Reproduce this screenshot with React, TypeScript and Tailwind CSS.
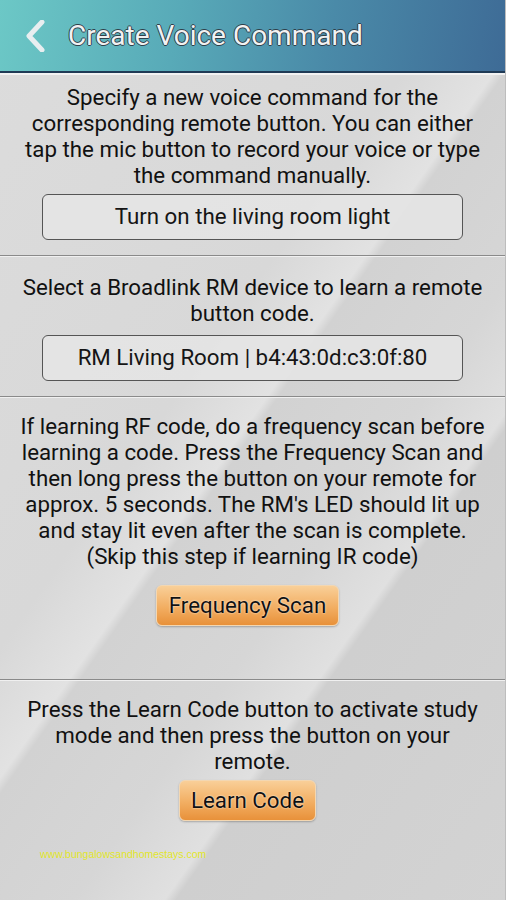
import React from "react";

const font = { fontFamily: "Roboto, 'Noto Sans', sans-serif" };

function Divider() {
  return (
    <div className="flex flex-col">
      <div className="h-px bg-[#8a8a8a]" />
      <div className="h-px bg-[#f0f0f0]" />
    </div>
  );
}

function Lines({ lines }: { lines: string[] }) {
  return (
    <div className="flex flex-col items-center text-[22.3px] leading-[26px] text-[#111] whitespace-nowrap">
      {lines.map((l) => (
        <span key={l}>{l}</span>
      ))}
    </div>
  );
}

function Field({ children }: { children: React.ReactNode }) {
  return (
    <div className="mx-[42px] h-[46px] rounded-[6px] border border-[#555] bg-[#e4e4e4]/90 flex items-center justify-center text-[22.3px] text-[#151515]">
      {children}
    </div>
  );
}

function OrangeButton({ children, w }: { children: React.ReactNode; w: string }) {
  return (
    <div className="flex justify-center pr-[10px]">
      <div
        className={`${w} h-[41px] rounded-[6px] border border-[#f3d7b2] bg-[linear-gradient(180deg,#f9cf98_0%,#f2ae62_55%,#e8913a_100%)] shadow-[0_1px_2px_rgba(0,0,0,0.25)] flex items-center justify-center text-[22.3px] text-[#111] [text-shadow:0_0_2px_#fff]`}
      >
        {children}
      </div>
    </div>
  );
}

export default function App() {
  return (
    <div
      style={font}
      className="w-[506px] h-[900px] overflow-hidden flex flex-col bg-[linear-gradient(125deg,#dcdcdc_0%,#d8d8d8_40%,#e2e2e2_48%,#d2d2d2_49%,#d6d6d6_62%,#e0e0e0_70%,#cfcfcf_71%,#d3d3d3_100%)] border-r border-[#bdbdbd]"
    >
      {/* Header */}
      <div className="h-[71px] shrink-0 flex items-center bg-[linear-gradient(100deg,#6cc8c6_0%,#58aab8_35%,#4a8aa8_65%,#3e6b96_100%)]">
        <svg width="22" height="32" viewBox="0 0 22 32" className="ml-[24px]">
          <path d="M18 2 L5 16 L18 30" fill="none" stroke="#e8eef0" strokeWidth="5" strokeLinecap="round" strokeLinejoin="round" />
        </svg>
        <div className="ml-[22px] text-[28px] text-[#f2f2f2] [text-shadow:1px_0_0_#2f3f4a,-1px_0_0_#2f3f4a,0_1px_0_#2f3f4a,0_-1px_0_#2f3f4a]">
          Create Voice Command
        </div>
      </div>
      <div className="h-[2px] bg-[#1f3a55]" />
      <div className="h-[2px] bg-[#f2f2f2]" />

      {/* Section 1 */}
      <div className="pt-[9px] pb-[15px] flex flex-col">
        <Lines
          lines={[
            "Specify a new voice command for the",
            "corresponding remote button. You can either",
            "tap the mic button to record your voice or type",
            "the command manually.",
          ]}
        />
        <div className="mt-[6px]">
          <Field>Turn on the living room light</Field>
        </div>
      </div>
      <Divider />

      {/* Section 2 */}
      <div className="pt-[17px] pb-[15px] flex flex-col">
        <Lines lines={["Select a Broadlink RM device to learn a remote", "button code."]} />
        <div className="mt-[9px]">
          <Field>RM Living Room | b4:43:0d:c3:0f:80</Field>
        </div>
      </div>
      <Divider />

      {/* Section 3 */}
      <div className="pt-[15px] pb-[53px] flex flex-col">
        <Lines
          lines={[
            "If learning RF code, do a frequency scan before",
            "learning a code. Press the Frequency Scan and",
            "then long press the button on your remote for",
            "approx. 5 seconds. The RM's LED should lit up",
            "and stay lit even after the scan is complete.",
            "(Skip this step if learning IR code)",
          ]}
        />
        <div className="mt-[16px]">
          <OrangeButton w="w-[183px]">Frequency Scan</OrangeButton>
        </div>
      </div>
      <Divider />

      {/* Section 4 */}
      <div className="pt-[15px] flex flex-col">
        <Lines
          lines={[
            "Press the Learn Code button to activate study",
            "mode and then press the button on your",
            "remote.",
          ]}
        />
        <div className="mt-[6px]">
          <OrangeButton w="w-[137px]">Learn Code</OrangeButton>
        </div>
        <div
          className="mt-[26px] ml-[40px] text-[10.5px] leading-[14px] text-[#e2e62a]"
          style={{ fontFamily: "'Liberation Sans', sans-serif" }}
        >
          www.bungalowsandhomestays.com
        </div>
      </div>
    </div>
  );
}
